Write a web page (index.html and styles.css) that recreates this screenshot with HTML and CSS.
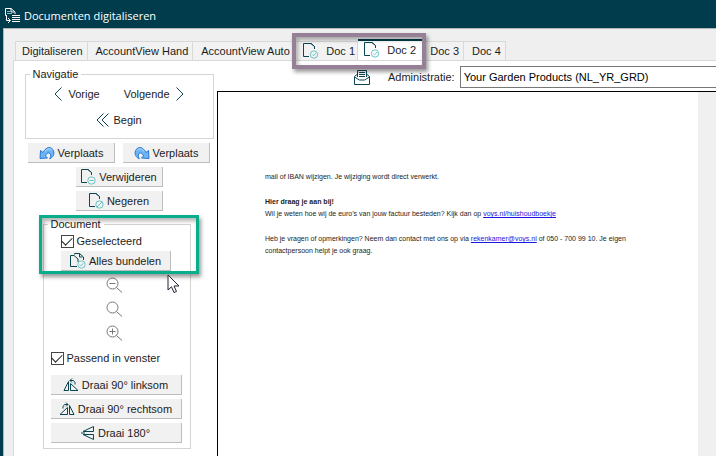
FILE: index.html
```html
<!DOCTYPE html>
<html lang="nl">
<head>
  <meta charset="UTF-8">
  <title>Documenten digitaliseren</title>
  <link rel="stylesheet" href="styles.css">
</head>
<body>

<header class="titlebar">
  <svg class="title-icon" width="17" height="17" viewBox="0 0 17 17" fill="none" stroke="#fff">
    <path d="M3 8.500H1.500V1.500H7L11 5v2" />
    <path d="M7 1.500V5H10" />
    <path d="M3 4.500h3M3 6.500h5" stroke="#8fb0b8" />
    <path d="M8 8.500h8M8 10.500h8M8 12.500h8M8 14.500h8" />
    <path d="M2.500 9v4.500H6M4 11l2.500 2.500L4 16" />
  </svg>
  <h1>Documenten digitaliseren</h1>
</header>

<div class="window">
  <div class="tabs" role="tablist">
    <button class="tab" role="tab">Digitaliseren</button>
    <button class="tab" role="tab">AccountView Hand</button>
    <button class="tab tab-cut" role="tab">AccountView Auto</button>
    <div class="marked-tabs">
      <button class="tab tab-doc" role="tab">
        <svg width="18" height="18" viewBox="0 0 18 18" fill="none">
          <path d="M12.500 7V4.500L9 1.500H1.500v13H7" stroke="#0b4552" />
          <path d="M9 1.500l3.500 3" stroke="#0b4552" />
          <circle cx="12" cy="12.500" r="3.700" stroke="#6cc4c4" />
          <path d="M10.300 12.500l1.300 1.300 2.400-2.700" stroke="#6cc4c4" />
        </svg>
        Doc 1
      </button>
      <button class="tab tab-doc active" role="tab" aria-selected="true">
        <svg width="18" height="18" viewBox="0 0 18 18" fill="none">
          <path d="M12.500 7V4.500L9 1.500H1.500v13H7" stroke="#0b4552" />
          <path d="M9 1.500l3.500 3" stroke="#0b4552" />
          <circle cx="12" cy="12.500" r="3.700" stroke="#6cc4c4" />
          <path d="M10.300 12.500l1.300 1.300 2.400-2.700" stroke="#6cc4c4" />
        </svg>
        Doc 2
      </button>
      <span class="mark mark-purple"></span>
    </div>
    <button class="tab" role="tab">Doc 3</button>
    <button class="tab" role="tab">Doc 4</button>
  </div>

  <main class="panel">
    <aside class="sidebar">
      <fieldset class="group nav">
        <legend>Navigatie</legend>
        <div class="nav-row">
          <button class="link-btn">
            <svg width="8" height="14" viewBox="0 0 8 14" fill="none" stroke="#0b4552"><path d="M7.500 .5L1 7l6.500 6.500" /></svg>
            Vorige
          </button>
          <button class="link-btn">
            Volgende
            <svg width="8" height="14" viewBox="0 0 8 14" fill="none" stroke="#0b4552"><path d="M.5 .5L7 7 .5 13.500" /></svg>
          </button>
        </div>
        <div class="nav-row">
          <button class="link-btn begin">
            <svg width="13" height="14" viewBox="0 0 13 14" fill="none" stroke="#0b4552"><path d="M7.500 .5L1 7l6.500 6.500M12.500 .5L6 7l6.500 6.500" /></svg>
            Begin
          </button>
        </div>
      </fieldset>

      <div class="pair">
        <button class="btn">
          <svg width="16" height="14" viewBox="0 0 16 14"><path d="M1.500 4.500L1 12.500l7.500-.5-2-2C7.500 7 10 6 11.300 8c.8 1.500.2 3.200-.6 4.800 3.500-1.500 5-5 3.800-8C13 .8 7.500-.3 4 6.500z" fill="#6bb5f5" stroke="#2a78d0" /><path d="M6 5.500c2-3 5-3.500 7-1" fill="none" stroke="#c5e5fd" /></svg>
          Verplaats
        </button>
        <button class="btn">
          <svg width="16" height="14" viewBox="0 0 16 14"><path d="M14.500 4.500l.5 8-7.500-.5 2-2C8.500 7 6 6 4.700 8c-.8 1.500-.2 3.200.6 4.800-3.500-1.500-5-5-3.800-8C3 .8 8.500-.3 12 6.500z" fill="#6bb5f5" stroke="#2a78d0" /><path d="M10 5.500c-2-3-5-3.500-7-1" fill="none" stroke="#c5e5fd" /></svg>
          Verplaats
        </button>
      </div>

      <button class="btn">
        <svg width="16" height="17" viewBox="0 0 16 17" fill="none">
          <path d="M11.500 7V4.500L8 1.500H1.500v13H7M8 1.500l3.500 3" stroke="#0b4552" />
          <circle cx="11.500" cy="12.500" r="3.700" stroke="#6cc4c4" />
          <path d="M9.500 12.500h4" stroke="#6cc4c4" />
        </svg>
        Verwijderen
      </button>
      <button class="btn">
        <svg width="16" height="17" viewBox="0 0 16 17" fill="none">
          <path d="M11.500 7V4.500L8 1.500H1.500v13H7M8 1.500l3.500 3" stroke="#0b4552" />
          <circle cx="11.500" cy="12.500" r="3.700" stroke="#6cc4c4" />
          <path d="M9 15l5-5" stroke="#6cc4c4" />
        </svg>
        Negeren
      </button>

      <fieldset class="group document">
        <legend>Document</legend>
        <label class="check indent"><input type="checkbox" checked>Geselecteerd</label>
        <button class="btn bundle">
          <svg width="17" height="17" viewBox="0 0 17 17" fill="none">
            <path d="M5.500 2.500V1.500h5l4 3.500v3M10.500 1.500V5h3M5 3.500H1.500v11H8M5 3.500l4 3.500v3" stroke="#0b4552" />
            <circle cx="12.500" cy="12.500" r="3.700" stroke="#6cc4c4" />
            <path d="M10.800 12.500l1.300 1.300 2.400-2.700" stroke="#6cc4c4" />
          </svg>
          Alles bundelen
        </button>
        <div class="zoom">
          <button class="icon-btn" aria-label="Uitzoomen">
            <svg width="17" height="16" viewBox="0 0 17 16" fill="none" stroke="#777"><circle cx="6.500" cy="6.500" r="5.500" /><path d="M10.500 10.500l5.500 5M3.500 6.500h6" /></svg>
          </button>
          <button class="icon-btn" aria-label="Zoom">
            <svg width="17" height="16" viewBox="0 0 17 16" fill="none" stroke="#777"><circle cx="6.500" cy="6.500" r="5.500" /><path d="M10.500 10.500l5.500 5" /></svg>
          </button>
          <button class="icon-btn" aria-label="Inzoomen">
            <svg width="17" height="16" viewBox="0 0 17 16" fill="none" stroke="#777"><circle cx="6.500" cy="6.500" r="5.500" /><path d="M10.500 10.500l5.500 5M3.500 6.500h6M6.500 3.500v6" /></svg>
          </button>
        </div>
        <label class="check"><input type="checkbox" checked>Passend in venster</label>
        <div class="rotate">
          <button class="btn">
            <svg width="16" height="14" viewBox="0 0 16 14" fill="none" stroke="#0b4552"><path d="M5.500 3.500v9H1zM7.500 5.500v7H15z" /><path d="M7 2.500h3.500l1.500 2v2M9 .5l-2 2 2 2" /></svg>
            Draai 90° linksom
          </button>
          <button class="btn">
            <svg width="16" height="14" viewBox="0 0 16 14" fill="none" stroke="#0b4552"><path d="M10.500 3.500v9H15zM8.500 5.500v7H1z" /><path d="M9 2.500H5.500L4 4.500v2M7 .5l2 2-2 2" /></svg>
            Draai 90° rechtsom
          </button>
          <button class="btn">
            <svg width="14" height="16" viewBox="0 0 14 16" fill="none" stroke="#0b4552"><path d="M12.500 1.500v5H2zM12.500 14.500v-5H2zM0 8h4" /></svg>
            Draai 180°
          </button>
        </div>
        <span class="mark mark-green"></span>
        <svg class="cursor" width="13" height="20" viewBox="0 0 13 20"><path d="M1 1v15l3.500-3.200L7 18.500l2.500-1-2.500-5.500h5z" fill="#fff" stroke="#223" /></svg>
      </fieldset>
    </aside>

    <section class="content">
      <div class="toolbar">
        <svg width="16" height="17" viewBox="0 0 16 17" fill="none" stroke="#0b4552"><path d="M3.500 8V1.500h9V8M5 3.500h6M5 5.500h6M5 7.500h6" /><path d="M3 5.500L.5 7.500v8h15v-8L13 5.500M.5 8l5 3h5l5-3" /></svg>
        <label for="administratie">Administratie:</label>
        <select id="administratie">
          <option>Your Garden Products (NL_YR_GRD)</option>
        </select>
      </div>
      <div class="viewer">
        <article class="paper">
          <p>mail of IBAN wijzigen. Je wijziging wordt direct verwerkt.</p>
          <p><strong>Hier draag je aan bij!</strong><br>
          Wil je weten hoe wij de euro’s van jouw factuur besteden? Kijk dan op <a href="#">voys.nl/huishoudboekje</a></p>
          <p>Heb je vragen of opmerkingen? Neem dan contact met ons op via <a href="#">rekenkamer@voys.nl</a> of 050 - 700 99 10. Je eigen<br>
          contactpersoon helpt je ook graag.</p>
        </article>
      </div>
    </section>
  </main>
</div>

</body>
</html>
```
FILE: styles.css
```css
* { box-sizing: border-box; }

body {
  margin: 0;
  height: 100vh;
  display: flex;
  flex-direction: column;
  background: #003c4b;
  color: #1c1c1c;
  font-family: "Liberation Sans", Arial, sans-serif;
  font-size: 11px;
  line-height: 14px;
  overflow: hidden;
}

button, select, input { font: inherit; color: inherit; }
button { white-space: nowrap; }
svg { flex: none; }

.titlebar {
  flex: none;
  height: 28px;
  display: flex;
  align-items: center;
  gap: 3px;
  padding: 3px 4px 0;
}

.titlebar h1 {
  margin: 0;
  color: white;
  font-family: "Open Sans", "Segoe UI", sans-serif;
  font-size: 11px;
  font-weight: normal;
}

.window {
  flex: 1;
  min-height: 0;
  display: flex;
  flex-direction: column;
  margin-left: 3px;
  padding: 10px 0 0 9px;
  background: #efefef;
  border-top: 1px solid #b5b5b5;
  border-left: 1px solid #b5b5b5;
}

/* tabs */
.tabs {
  flex: none;
  height: 21px;
  display: flex;
  align-items: flex-end;
  padding-left: 2px;
}

.tab {
  height: 19px;
  padding: 0 4px 0 6px;
  border: 1px solid #d9d9d9;
  border-width: 1px 1px 0;
  background: #f2f2f2;
}
.tab + .tab { border-left: none; padding-left: 8px; }
.tab-cut { width: 100px; padding-right: 0; text-align: left; }

.marked-tabs {
  position: relative;
  display: flex;
  align-items: flex-end;
}

.tab-doc {
  display: flex;
  align-items: center;
  gap: 6px;
  width: 65px;
  padding-left: 8px;
}
.tab-doc + .tab-doc { padding-left: 5px; }

.tab-doc.active {
  height: 21px;
  padding-bottom: 2px;
  background: white;
  border-top: 2px solid #003c4b;
}

.mark {
  position: absolute;
  pointer-events: none;
  box-shadow: 2px 3px 4px rgba(0, 0, 0, 0.4), inset 2px 3px 4px rgba(0, 0, 0, 0.3);
}
.mark-purple { inset: -6px -3px -9px -1px; border: 4px solid #958095; }
.mark-green { inset: -16px -9px auto -5px; height: 59px; border: 3px solid #08ad8c; }

/* panel */
.panel {
  flex: 1;
  min-height: 0;
  display: flex;
  background: white;
  border-top: 1px solid #d9d9d9;
  border-left: 1px solid #d9d9d9;
}

.sidebar {
  flex: none;
  width: 203px;
  display: flex;
  flex-direction: column;
  align-items: center;
  gap: 4px;
  padding: 6px 0 0 7px;
}

.group {
  margin: 0;
  padding: 0 4px;
  border: 1px solid #d5d5d5;
}
.group legend { padding: 0 3px; }

.nav { width: 189px; height: 72px; flex: none; }

.nav-row {
  display: flex;
  justify-content: center;
  gap: 24px;
  height: 26px;
}

.link-btn {
  display: flex;
  align-items: center;
  gap: 6px;
  padding: 0;
  border: none;
  background: none;
}
.begin { gap: 4px; }

.btn {
  flex: none;
  display: flex;
  justify-content: center;
  align-items: center;
  gap: 3px;
  width: 87px;
  height: 20px;
  padding: 0;
  border: 0 solid #bdbdbd;
  border-width: 0 1px 1px 0;
  background: #f1f1f1;
}

.pair {
  display: flex;
  gap: 8px;
}

.document {
  position: relative;
  width: 148px;
  min-width: 0;
  margin: 2px 5px 0 0;
  padding: 0 7px 5px;
}
.document legend { margin-left: -3px; }

.check {
  display: flex;
  align-items: center;
  gap: 3px;
  height: 20px;
}
.check.indent { padding-left: 10px; }

.check input {
  appearance: none;
  width: 13px;
  height: 13px;
  margin: 0;
  border: 1px solid #444;
  background: white;
  display: grid;
  place-items: center;
}
.check input:checked::before {
  content: "";
  width: 9px;
  height: 5px;
  border: solid #222;
  border-width: 0 0 1px 1px;
  transform: translateY(-1px) rotate(-45deg);
}

.bundle { width: 110px; margin-left: 10px; }

.zoom {
  display: flex;
  flex-direction: column;
  align-items: center;
  gap: 8px;
  padding: 6px 4px 7px 0;
}

.icon-btn {
  display: flex;
  padding: 0;
  border: none;
  background: none;
}

.rotate {
  display: flex;
  flex-direction: column;
  gap: 4px;
  padding-top: 7px;
}
.rotate .btn { width: 131px; }

.cursor {
  position: absolute;
  left: 123px;
  top: 43px;
}

/* document viewer */
.content {
  flex: 1;
  min-width: 0;
  display: flex;
  flex-direction: column;
}

.toolbar {
  flex: none;
  height: 30px;
  display: flex;
  align-items: center;
  padding: 2px 0 0 137px;
}
.toolbar label { margin: 0 5px 0 18px; }

.toolbar select {
  flex: 1;
  min-width: 0;
  height: 22px;
  margin-right: -2px;
  padding: 0 3px;
  appearance: none;
  border: 1px solid #777;
  border-radius: 0;
  background: white;
  color: black;
}

.viewer {
  flex: 1;
  display: flex;
  background: #f0f0f0;
  border-top: 1px solid black;
  border-left: 1px solid black;
}

.paper {
  flex: 1;
  margin-right: 18px;
  padding: 79px 0 0 47px;
  background: white;
  font-size: 7px;
  line-height: 12px;
  white-space: nowrap;
}
.paper p { margin: 0 0 13px; }
.paper a { color: #1818e0; }
```
